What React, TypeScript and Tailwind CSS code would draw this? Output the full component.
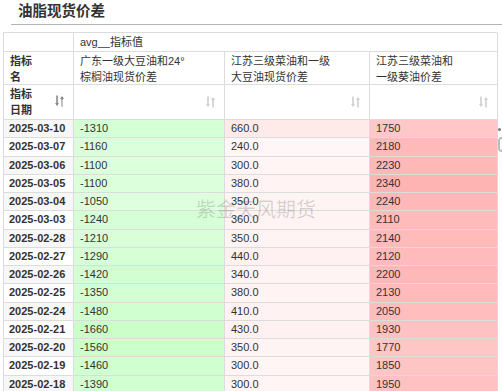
import React from 'react';

type Row = { date: string; gd: number; js: number; kw: number };

const rows: Row[] = [
  { date: '2025-03-10', gd: -1310, js: 660, kw: 1750 },
  { date: '2025-03-07', gd: -1160, js: 240, kw: 2180 },
  { date: '2025-03-06', gd: -1100, js: 300, kw: 2230 },
  { date: '2025-03-05', gd: -1100, js: 380, kw: 2340 },
  { date: '2025-03-04', gd: -1050, js: 350, kw: 2240 },
  { date: '2025-03-03', gd: -1240, js: 360, kw: 2110 },
  { date: '2025-02-28', gd: -1210, js: 350, kw: 2140 },
  { date: '2025-02-27', gd: -1290, js: 440, kw: 2120 },
  { date: '2025-02-26', gd: -1420, js: 340, kw: 2200 },
  { date: '2025-02-25', gd: -1350, js: 380, kw: 2130 },
  { date: '2025-02-24', gd: -1480, js: 410, kw: 2050 },
  { date: '2025-02-21', gd: -1660, js: 430, kw: 1930 },
  { date: '2025-02-20', gd: -1560, js: 350, kw: 1770 },
  { date: '2025-02-19', gd: -1460, js: 300, kw: 1850 },
  { date: '2025-02-18', gd: -1390, js: 300, kw: 1950 },
];

const MAX = 2340;

// heatmap colour: green for negatives, red for positives
function heat(v: number) {
  const t = Math.min(Math.abs(v) / MAX, 1);
  const c = Math.round(255 - t * 75);
  return v < 0 ? `rgb(${c},255,${c})` : `rgb(255,${c},${c})`;
}

function SortIcon({ active }: { active?: boolean }) {
  const color = active ? '#8a8a8a' : '#cfcfcf';
  return (
    <svg width="9" height="12" viewBox="0 0 9 12" fill="none">
      <path d="M2 0.5V10" stroke={color} strokeWidth="1.6" />
      <path d="M0 8L2 11L4 8Z" fill={color} />
      <path d="M7 2V11.5" stroke={color} strokeWidth="1.6" />
      <path d="M5 4L7 1L9 4Z" fill={color} />
      {active ? (
        <>
          <path d="M5 6H9M5 8H9M5 10H9" stroke="#fff" strokeWidth="0.7" />
        </>
      ) : null}
    </svg>
  );
}

const cell = 'border-r border-b border-[#dcdcdc]';

export default function App() {
  return (
    <div className="relative h-[391px] w-[502px] overflow-hidden bg-white font-['Liberation_Sans','Noto_Sans_CJK_SC',sans-serif] text-[11px] text-[#333]">
      <div className="h-[24px] pl-[18px] pt-[1px] text-[14.5px] font-bold leading-[20px] text-[#333]">油脂现货价差</div>
      <div className="ml-[11px] h-px bg-[#b4b4b4]" />

      <div className="mt-[7px] ml-[3px] grid w-[494px] grid-cols-[70px_151px_145px_128px] border-l border-t border-[#dcdcdc]">
        {/* header row 1 */}
        <div className={`${cell} h-[19px]`} />
        <div className={`${cell} col-span-3 h-[19px] pl-[6px] leading-[18px]`}>avg__指标值</div>

        {/* header row 2 */}
        <div className={`${cell} h-[33px] pl-[6px] pt-[1px] font-bold leading-[16px]`}>
          指标
          <br />名
        </div>
        <div className={`${cell} h-[33px] pl-[6px] pt-[1px] leading-[16px]`}>
          广东一级大豆油和24°
          <br />
          棕榈油现货价差
        </div>
        <div className={`${cell} h-[33px] pl-[6px] pt-[1px] leading-[16px]`}>
          江苏三级菜油和一级
          <br />
          大豆油现货价差
        </div>
        <div className={`${cell} h-[33px] pl-[6px] pt-[1px] leading-[16px]`}>
          江苏三级菜油和
          <br />
          一级葵油价差
        </div>

        {/* header row 3 */}
        <div className={`${cell} flex h-[35px] items-center justify-between pl-[6px] pr-[9px] font-bold leading-[16px]`}>
          <span>
            指标
            <br />
            日期
          </span>
          <span className="mb-[2px]">
            <SortIcon active />
          </span>
        </div>
        {[0, 1, 2].map((i) => (
          <div key={i} className={`${cell} flex h-[35px] items-center justify-end pr-[9px]`}>
            <SortIcon />
          </div>
        ))}

        {/* data rows */}
        {rows.map((r, i) => (
          <React.Fragment key={r.date}>
            <div className={`${cell} h-[18.25px] pl-[5px] font-bold leading-[17px] ${i % 2 === 0 ? 'bg-[#f7f7f7]' : 'bg-white'}`}>
              {r.date}
            </div>
            <div className={`${cell} h-[18.25px] pl-[6px] leading-[17px]`} style={{ backgroundColor: heat(r.gd) }}>
              {r.gd}
            </div>
            <div className={`${cell} h-[18.25px] pl-[6px] leading-[17px]`} style={{ backgroundColor: heat(r.js) }}>
              {r.js.toFixed(1)}
            </div>
            <div className={`${cell} h-[18.25px] pl-[6px] leading-[17px]`} style={{ backgroundColor: heat(r.kw) }}>
              {r.kw}
            </div>
          </React.Fragment>
        ))}
      </div>

      {/* watermark */}
      <div className="pointer-events-none absolute left-[196px] top-[198px] text-[20px] leading-[24px] text-[rgba(0,0,0,0.16)]">
        紫金天风期货
      </div>

      {/* clipped floating control at the right edge */}
      <div className="absolute left-[498px] top-[128px] h-[3px] w-[3px] rounded-full bg-[#777]" />
      <div className="absolute left-[498px] top-[137px] h-[15px] w-[8px] rounded-[4px] border-2 border-[#bbb]" />
    </div>
  );
}
